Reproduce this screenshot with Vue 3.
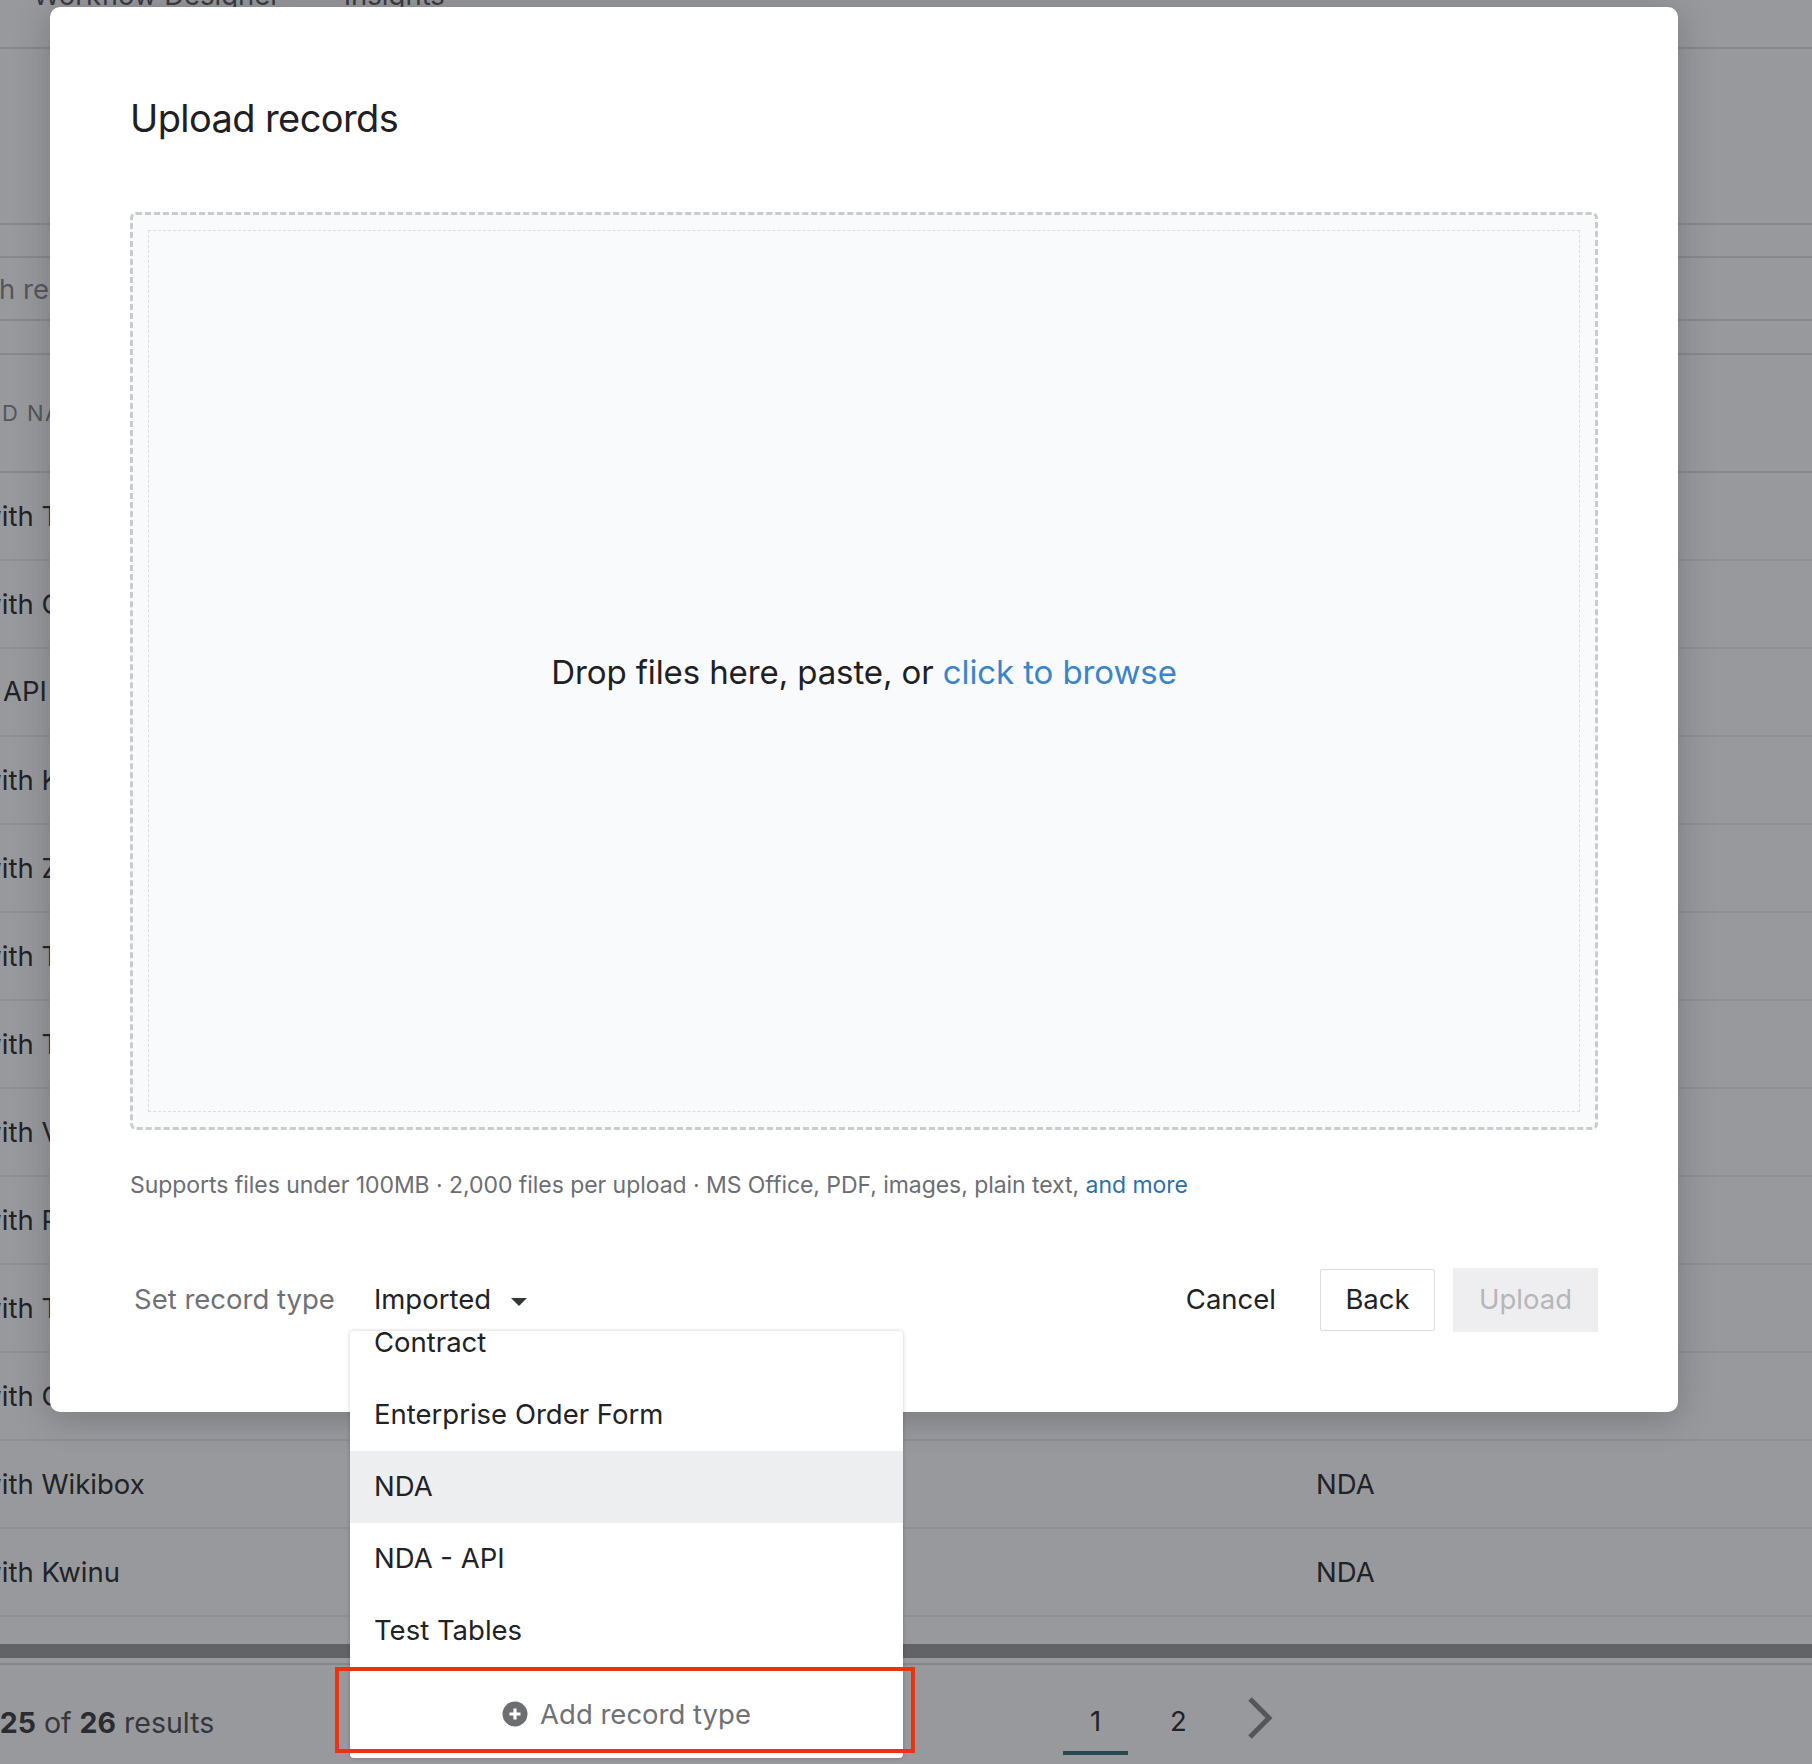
<script setup>
const rows = [
  { name: 'NDA with Tixo', type: 'NDA' },
  { name: 'NDA with Oyoba', type: 'NDA' },
  { name: 'API', type: 'NDA', plain: true },
  { name: 'NDA with Kaymbo', type: 'NDA' },
  { name: 'NDA with Zoomlounge', type: 'NDA' },
  { name: 'NDA with Twitterlist', type: 'NDA' },
  { name: 'NDA with Trudoo', type: 'NDA' },
  { name: 'NDA with Vinte', type: 'NDA' },
  { name: 'NDA with Photofeed', type: 'NDA' },
  { name: 'NDA with Tagfeed', type: 'NDA' },
  { name: 'NDA with Oozz', type: 'NDA' },
  { name: 'NDA with Wikibox', type: 'NDA' },
  { name: 'NDA with Kwinu', type: 'NDA' }
]
const options = ['Contract', 'Enterprise Order Form', 'NDA', 'NDA - API', 'Test Tables']
</script>

<template>
  <div class="page">
    <div class="tabs">
      <span>Workflow Designer</span>
      <span>Insights</span>
    </div>
    <div class="band band-a"></div>
    <div class="band band-b"></div>
    <div class="search"><span>Search records</span></div>
    <div class="band band-c"></div>
    <div class="thead"><span>RECORD NAME</span></div>
    <div v-for="r in rows" :key="r.name" class="row">
      <span class="cell-name" :class="{ plain: r.plain }">{{ r.name }}</span>
      <span class="cell-type">{{ r.type }}</span>
    </div>
    <div class="spacer"></div>
    <div class="scrollbar"></div>
    <div class="foot">
      <span class="results">1 - <b>25</b> of <b>26</b> results</span>
      <div class="pager">
        <span class="pg active">1</span>
        <span class="pg">2</span>
        <svg class="chev" width="26" height="42" viewBox="0 0 26 42">
          <path d="M3 2 L22 21 L3 40" fill="none" stroke="#55565a" stroke-width="5" />
        </svg>
      </div>
    </div>

    <div class="modal">
      <h1 class="title">Upload records</h1>
      <div class="drop">
        <div class="drop-inner">
          <p class="drop-text">Drop files here, paste, or <a class="browse">click to browse</a></p>
        </div>
      </div>
      <p class="help">Supports files under 100MB · 2,000 files per upload · MS Office, PDF, images, plain text, <a class="more">and more</a></p>
      <div class="actions">
        <span class="set-label">Set record type</span>
        <span class="select">Imported<i class="caret"></i></span>
        <span class="cancel">Cancel</span>
        <span class="btn back">Back</span>
        <span class="btn upload">Upload</span>
      </div>
    </div>

    <div class="menu">
      <div class="list">
        <div v-for="o in options" :key="o" class="opt" :class="{ hover: o === 'NDA' }">{{ o }}</div>
      </div>
      <div class="add">
        <svg width="26" height="26" viewBox="0 0 26 26">
          <circle cx="13" cy="13" r="12.5" fill="#6c6e71" />
          <path d="M13 7.5v11M7.5 13h11" stroke="#fff" stroke-width="3.2" />
        </svg>
        <span>Add record type</span>
      </div>
    </div>
    <div class="callout"></div>
  </div>
</template>

<style>
html, body { margin: 0; background: #98999d; }
</style>

<style scoped>
.page {
  position: relative;
  width: 1812px;
  height: 1764px;
  overflow: hidden;
  background: #98999d;
  font-family: Inter, "Liberation Sans", sans-serif;
  font-size: 27.5px;
  color: #212225;
}
.tabs {
  height: 47px;
  display: flex;
  gap: 63px;
  padding-left: 33px;
  border-bottom: 2px solid #88898d;
  line-height: 30px;
  color: #3a3b3f;
  box-sizing: content-box;
}
.tabs span { margin-top: -20px; height: 30px; }
.band { border-bottom: 2px solid #88898d; box-sizing: border-box; }
.band-a { height: 176px; }
.band-b { height: 33px; }
.band-c { height: 34px; }
.search {
  height: 63px;
  border-bottom: 2px solid #88898d;
  box-sizing: border-box;
  display: flex;
  align-items: center;
  margin-left: -76px;
  color: #55565a;
  white-space: nowrap;
}
.thead {
  height: 118px;
  border-bottom: 2px solid #88898d;
  box-sizing: border-box;
  display: flex;
  align-items: center;
  margin-left: -80px;
  font-size: 22px;
  letter-spacing: 1.5px;
  color: #55565a;
  white-space: nowrap;
}
.row {
  height: 88px;
  border-bottom: 2px solid #8e8f93;
  box-sizing: border-box;
  display: flex;
  align-items: center;
  position: relative;
  white-space: nowrap;
}
.cell-name { margin-left: -87px; }
.cell-name.plain { margin-left: 3px; padding-bottom: 3px; }
.cell-type { position: absolute; left: 1316px; }
.spacer { height: 27px; }
.scrollbar { height: 14px; background: #636367; }
.foot {
  margin-top: 5px;
  border-top: 2px solid #85868a;
  height: 99px;
  display: flex;
  align-items: flex-start;
  white-space: nowrap;
}
.results { margin-left: -41px; margin-top: 40px; color: #36373b; font-size: 28.5px; }
.results b { font-weight: 700; color: #2b2c30; }
.pager {
  position: absolute;
  left: 1063px;
  top: 1690px;
  display: flex;
  align-items: flex-start;
  gap: 18px;
}
.pg {
  width: 65px;
  height: 61px;
  box-sizing: content-box;
  border-bottom: 4px solid transparent;
  display: flex;
  align-items: center;
  justify-content: center;
  line-height: 56px;
  padding-bottom: 0;
}
.pg.active { border-bottom-color: #28474f; }
.chev { margin-left: 18px; margin-top: 7px; }

.modal {
  position: absolute;
  left: 50px;
  top: 7px;
  width: 1628px;
  height: 1405px;
  box-sizing: border-box;
  padding: 0 80px;
  background: #fff;
  border-radius: 10px;
  box-shadow: 0 6px 34px rgba(40, 40, 45, 0.28);
  display: flex;
  flex-direction: column;
}
.title {
  margin: 0;
  height: 205px;
  padding-top: 88px;
  box-sizing: border-box;
  font-size: 38px;
  line-height: 46px;
  font-weight: 400;
  letter-spacing: -0.6px;
  color: #1f2023;
}
.drop {
  height: 918px;
  box-sizing: border-box;
  border: 3px dashed #cbcbcd;
  border-radius: 6px;
  background: #f9fafb;
  padding: 15px;
}
.drop-inner {
  height: 100%;
  box-sizing: border-box;
  border: 1px dashed #dcdde0;
  display: flex;
  align-items: center;
  justify-content: center;
}
.drop-text { margin: 0; padding-top: 1px; font-size: 33px; letter-spacing: -0.1px; color: #1f2023; }
.browse { color: #3c84c9; }
.help {
  margin: 38px 0 0;
  font-size: 23px;
  line-height: 34px;
  letter-spacing: -0.05px;
  color: #6c6e72;
  white-space: nowrap;
}
.more { color: #2f6fa7; }
.actions {
  margin-top: 66px;
  height: 64px;
  display: flex;
  align-items: center;
}
.set-label { margin-left: 4px; padding-bottom: 2px; color: #6f7175; }
.select { margin-left: 39px; padding-bottom: 2px; display: flex; align-items: center; color: #212225; }
.caret {
  margin-left: 20px;
  margin-top: 5px;
  width: 0;
  height: 0;
  border-left: 8px solid transparent;
  border-right: 8px solid transparent;
  border-top: 8px solid #35363a;
}
.cancel { margin-left: auto; margin-right: 44px; padding-bottom: 2px; }
.btn {
  height: 62px;
  box-sizing: border-box;
  display: flex;
  align-items: center;
  justify-content: center;
  padding-bottom: 2px;
}
.back { width: 115px; border: 1px solid #dcdcde; border-radius: 2px; }
.upload { width: 145px; height: 64px; margin-left: 18px; background: #eeeef0; color: #b6b6ba; }

.menu {
  position: absolute;
  left: 350px;
  top: 1331px;
  width: 553px;
  height: 427px;
  overflow: hidden;
  background: #fff;
  border-radius: 4px;
  box-shadow: 0 0 4px rgba(0, 0, 0, 0.2);
}
.list { margin-top: -24px; }
.opt {
  height: 72px;
  box-sizing: border-box;
  padding: 0 0 2px 24px;
  display: flex;
  align-items: center;
}
.opt.hover { background: #edeef0; }
.add {
  margin-top: 29px;
  display: flex;
  align-items: center;
  justify-content: center;
  gap: 12px;
  height: 36px;
  color: #6f7175;
}
.callout {
  position: absolute;
  left: 335px;
  top: 1667px;
  width: 580px;
  height: 86px;
  box-sizing: border-box;
  border: 4px solid #ea3312;
}
</style>
